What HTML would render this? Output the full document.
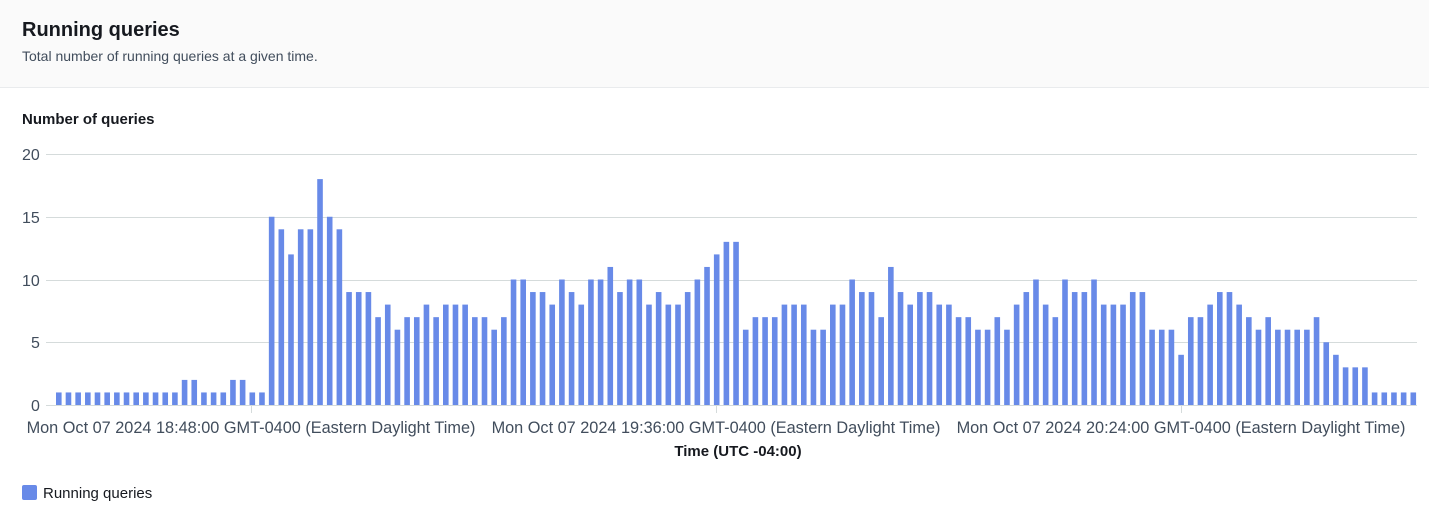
<!DOCTYPE html>
<html><head><meta charset="utf-8"><style>
body{margin:0;width:1429px;height:528px;background:#fff;font-family:"Liberation Sans",Arial,sans-serif;color:#16191f;overflow:hidden;position:relative}
.hdr{position:absolute;left:0;top:0;width:1429px;height:87px;background:#fafafa;border-bottom:1px solid #e9ebed}
.t{position:absolute;left:22px;top:19px;font-size:20px;font-weight:bold}
.s{position:absolute;left:22px;top:48px;font-size:14px;color:#414d5c}
.yl{position:absolute;left:22px;top:111px;font-size:15px;font-weight:bold}
svg{position:absolute;left:0;top:0}
.leg{position:absolute;left:22px;top:485px;font-size:15px}
.leg i{display:inline-block;width:15px;height:15px;background:#688ae8;border-radius:2px;vertical-align:-2px;margin-right:6px}
</style></head><body>
<div class="hdr"><div class="t">Running queries</div><div class="s">Total number of running queries at a given time.</div></div>
<div class="yl">Number of queries</div>
<svg width="1429" height="528" id="c" font-family="Liberation Sans, Arial, sans-serif">
<g stroke="#d5dbdb" stroke-width="1">
<line x1="46" x2="1417" y1="154.5" y2="154.5"/><line x1="46" x2="1417" y1="217.5" y2="217.5"/><line x1="46" x2="1417" y1="280.5" y2="280.5"/><line x1="46" x2="1417" y1="342.5" y2="342.5"/>
</g>
<g fill="#414d5c" font-size="16">
<text x="22" y="160">20</text><text x="22" y="223">15</text><text x="22" y="286">10</text><text x="31" y="348">5</text><text x="31" y="411">0</text>
</g>
<g id="bars" fill="#688ae8"></g>
<line x1="46" x2="1417" y1="405.5" y2="405.5" stroke="#d5dbdb"/>
<g stroke="#d5dbdb"><line x1="251.5" x2="251.5" y1="405" y2="413"/><line x1="716.5" x2="716.5" y1="405" y2="413"/><line x1="1181.5" x2="1181.5" y1="405" y2="413"/></g>
<g fill="#414d5c" font-size="16.3" text-anchor="middle">
<text x="251" y="433">Mon Oct 07 2024 18:48:00 GMT-0400 (Eastern Daylight Time)</text>
<text x="716" y="433">Mon Oct 07 2024 19:36:00 GMT-0400 (Eastern Daylight Time)</text>
<text x="1181" y="433">Mon Oct 07 2024 20:24:00 GMT-0400 (Eastern Daylight Time)</text>
</g>
<text x="738" y="456" text-anchor="middle" font-size="15" font-weight="bold" fill="#16191f">Time (UTC -04:00)</text>
</svg>
<div class="leg"><i></i>Running queries</div>
<script>
var v=[1,1,1,1,1,1,1,1,1,1,1,1,1,2,2,1,1,1,2,2,1,1,15,14,12,14,14,18,15,14,9,9,9,7,8,6,7,7,8,7,8,8,8,7,7,6,7,10,10,9,9,8,10,9,8,10,10,11,9,10,10,8,9,8,8,9,10,11,12,13,13,6,7,7,7,8,8,8,6,6,8,8,10,9,9,7,11,9,8,9,9,8,8,7,7,6,6,7,6,8,9,10,8,7,10,9,9,10,8,8,8,9,9,6,6,6,4,7,7,8,9,9,8,7,6,7,6,6,6,6,7,5,4,3,3,3,1,1,1,1,1];
var g=document.getElementById('bars'),s='';
for(var i=0;i<v.length;i++){var x=56+i*9.675,h=v[i]*12.55;s+='<rect x="'+x.toFixed(2)+'" y="'+(405-h).toFixed(2)+'" width="5.6" height="'+h.toFixed(2)+'"/>';}
g.innerHTML=s;
</script>
</body></html>
